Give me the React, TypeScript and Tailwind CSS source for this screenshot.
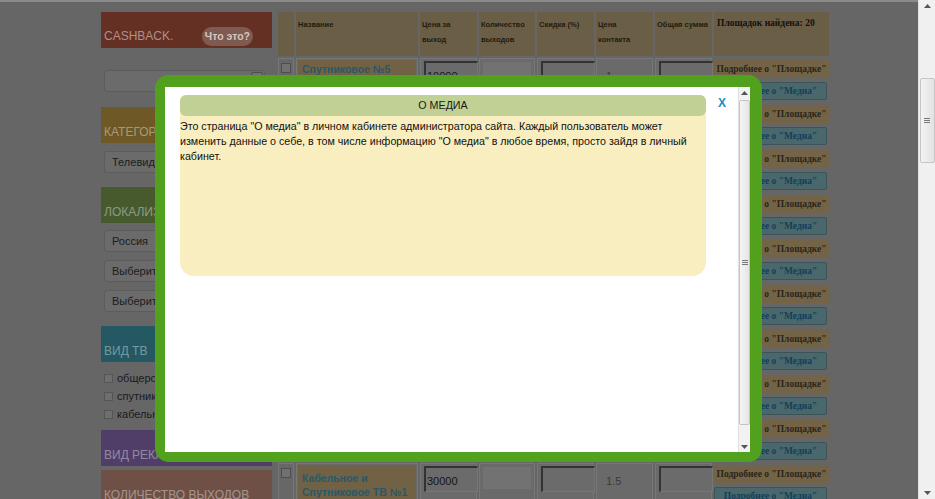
import React from 'react';

const sans = { fontFamily: '"Liberation Sans", Arial, sans-serif' };
const serif = { fontFamily: '"Liberation Serif", "Times New Roman", serif' };

const colWidths = ['w-[16px]', 'w-[122px]', 'w-[57px]', 'w-[56px]', 'w-[57px]', 'w-[57px]', 'w-[57px]', 'w-[115px]'];

const headers: string[][] = [
  [],
  ['Название'],
  ['Цена за', 'выход'],
  ['Количество', 'выходов'],
  ['Скидка (%)'],
  ['Цена', 'контакта'],
  ['Общая сумма'],
];

const rows = [
  { name: 'Спутниковое №5', price: '10000', contact: '1' },
  { name: 'Кабельное ТВ №2', price: '20000', contact: '1' },
  { name: 'Общероссийское №3', price: '15000', contact: '1' },
  { name: 'Спутниковое №7', price: '12000', contact: '1' },
  { name: 'Кабельное ТВ №4', price: '18000', contact: '1' },
  { name: 'Спутниковое №8', price: '11000', contact: '1' },
  { name: 'Кабельное ТВ №6', price: '25000', contact: '1' },
  { name: 'Общероссийское №9', price: '16000', contact: '1' },
  { name: 'Спутниковое №10', price: '14000', contact: '1' },
  { name: 'Кабельное и Спутниковое ТВ №1', price: '30000', contact: '1.5' },
];

function SideHead({ label, color }: { label: string; color: string }) {
  return (
    <div className={`shrink-0 h-[36px] ${color} flex items-end pb-[2px] pl-[3px]`}>
      <span className="text-[12px] uppercase text-white/40 whitespace-nowrap">{label}</span>
    </div>
  );
}

function Select({ label }: { label: string }) {
  return (
    <div className="shrink-0 h-[22px] w-[160px] ml-[3px] rounded-[3px] border border-[#5c5c5c] bg-[#6b6b6b] pl-[7px] text-[11px] leading-[20px] text-[#1c1c1c] whitespace-nowrap">
      {label}
    </div>
  );
}

function Check({ label }: { label: string }) {
  return (
    <div className="shrink-0 flex items-center gap-[4px] h-[18px] pl-[3px] text-[11px] text-[#1a1a1a]">
      <span className="w-[9px] h-[9px] border border-[#555] bg-[#6e6e6e]" />
      {label}
    </div>
  );
}

function Input({ value }: { value?: string }) {
  return (
    <div className="mt-[2px] ml-[3px] h-[26px] w-[54px] border-t-2 border-l-2 border-[#333] border-r border-b border-r-[#777] border-b-[#777] bg-[#6b6b6b] pl-[1px] pt-[5px] text-[11px] text-[#151515]">
      {value}
    </div>
  );
}

function Row({ r, last }: { r: (typeof rows)[number]; last?: boolean }) {
  return (
    <div className="shrink-0 flex gap-[2px] h-[43px]">
      <div className={`${colWidths[0]} border border-[#777] bg-[#676767] flex justify-center pt-[4px]`}>
        <span className="w-[10px] h-[10px] border border-[#4e4e4e] bg-[#707070]" />
      </div>
      <div className={`${colWidths[1]} border border-[#777] bg-[#6a6a6a] p-[1px]`}>
        <div className={`h-full bg-[#716246] px-[4px] ${last ? 'pt-[6px]' : 'pt-[2px]'} text-[10.5px] font-bold leading-[14px] text-[#2a5866]`}>
          {r.name}
        </div>
      </div>
      <div className={`${colWidths[2]} border border-[#777] bg-[#6a6a6a]`}>
        <Input value={r.price} />
      </div>
      <div className={`${colWidths[3]} border border-[#777] bg-[#6a6a6a] p-[3px]`}>
        <div className="h-[22px] bg-[#727272]" />
      </div>
      <div className={`${colWidths[4]} border border-[#777] bg-[#6a6a6a]`}>
        <Input />
      </div>
      <div className={`${colWidths[5]} border border-[#777] bg-[#6a6a6a] pl-[9px] pt-[9px] text-[11px] text-[#3a3a3a]`}>
        {r.contact}
      </div>
      <div className={`${colWidths[6]} border border-[#777] bg-[#6a6a6a]`}>
        <Input />
      </div>
      <div className={`${colWidths[7]} flex flex-col gap-[4px] pt-[2px]`} style={serif}>
        <div className="h-[18px] rounded-[2px] bg-[#736447] text-center text-[9.5px] font-bold leading-[18px] text-[#2b2519] whitespace-nowrap">
          Подробнее о "Площадке"
        </div>
        <div className="h-[18px] w-[113px] rounded-[2px] border border-[#3a5458] bg-[#4a686c] text-center text-[9.5px] font-bold leading-[16px] text-[#123f58] whitespace-nowrap">
          Подробнее о "Медиа"
        </div>
      </div>
    </div>
  );
}

function ArrowUp() {
  return (
    <svg width="7" height="4" viewBox="0 0 7 4">
      <path d="M0 4 L3.5 0 L7 4 Z" fill="#555" />
    </svg>
  );
}

function ArrowDown() {
  return (
    <svg width="7" height="4" viewBox="0 0 7 4">
      <path d="M0 0 L3.5 4 L7 0 Z" fill="#555" />
    </svg>
  );
}

function Grip() {
  return (
    <div className="flex flex-col gap-[1px]">
      <span className="block w-[6px] h-[1px] bg-[#777]" />
      <span className="block w-[6px] h-[1px] bg-[#777]" />
      <span className="block w-[6px] h-[1px] bg-[#777]" />
    </div>
  );
}

export default function App() {
  return (
    <div className="relative w-[935px] h-[499px] overflow-hidden flex bg-[#666666]" style={sans}>
      {/* page under the dim layer */}
      <div className="w-[918px] h-full overflow-hidden border-t-2 border-[#8a8a8a] flex items-start pl-[101px] pt-[10px]">
        <aside className="shrink-0 w-[171px] flex flex-col">
          <div className="shrink-0 h-[36px] bg-[#643024] flex items-end justify-between pl-[3px] pr-[19px] pb-[2px]">
            <span className="text-[12px] text-[#b09088] pb-[1px]">CASHBACK.</span>
            <span className="h-[19px] px-[3px] rounded-full bg-[#7e5a50] text-[10.5px] font-bold leading-[19px] text-[#d6c6c0]">Что это?</span>
          </div>
          <div className="shrink-0 mt-[22px] h-[22px] w-[161px] ml-[3px] rounded-[3px] border border-[#5c5c5c] bg-[#6b6b6b] flex justify-end pr-[1px] pt-[1px]">
            <span className="w-[12px] h-[10px] border border-[#4e4e4e] rounded-[2px] bg-[#707070]" />
          </div>
          <div className="mt-[15px]"><SideHead label="Категории" color="bg-[#6e5826]" /></div>
          <div className="mt-[8px]"><Select label="Телевидение" /></div>
          <div className="mt-[14px]"><SideHead label="Локализация" color="bg-[#465a2e]" /></div>
          <div className="mt-[7px] flex flex-col gap-[8px]">
            <Select label="Россия" />
            <Select label="Выберите регион" />
            <Select label="Выберите город" />
          </div>
          <div className="mt-[14px]"><SideHead label="Вид ТВ" color="bg-[#245862]" /></div>
          <div className="mt-[7px] flex flex-col">
            <Check label="общероссийское" />
            <Check label="спутниковое" />
            <Check label="кабельное" />
          </div>
          <div className="mt-[7px]"><SideHead label="Вид рекламы" color="bg-[#503e68]" /></div>
          <div className="mt-[4px]"><SideHead label="Количество выходов" color="bg-[#6e5046]" /></div>
        </aside>

        <div className="shrink-0 ml-[6px] flex flex-col gap-[2px]">
          <div className="shrink-0 flex gap-[2px] h-[44px]">
            {headers.map((lines, i) => (
              <div key={i} className={`${colWidths[i]} bg-[#6b5e46] px-[2px] pt-[5px] text-[7.5px] font-bold leading-[15px] text-[#211b10] whitespace-nowrap`}>
                {lines.map((l) => (
                  <div key={l}>{l}</div>
                ))}
              </div>
            ))}
            <div className={`${colWidths[7]} bg-[#6b5e46] pl-[3px] pt-[4px] text-[9.5px] font-bold text-[#111]`} style={serif}>
              Площадок найдена: 20
            </div>
          </div>
          {rows.map((r, i) => (
            <Row key={i} r={r} last={i === rows.length - 1} />
          ))}
        </div>
      </div>

      {/* browser scrollbar */}
      <div className="w-[17px] h-full bg-[#f0f0f0] border-l border-[#e2e2e2] flex flex-col items-center">
        <div className="h-[12px] flex items-center justify-center"><ArrowUp /></div>
        <div className="mt-[66px] h-[85px] w-[15px] rounded-[2px] border border-[#c6c6c6] bg-gradient-to-r from-[#f3f3f3] to-[#e2e2e2] flex items-center justify-center">
          <Grip />
        </div>
        <div className="flex-1" />
        <div className="h-[12px] flex items-center justify-center"><ArrowDown /></div>
      </div>

      {/* modal */}
      <div className="absolute left-[155px] top-[75px] w-[607px] h-[387px] rounded-[14px] bg-[#52a11e] pt-[12px] pl-[10px] pr-[12px] pb-[10px]">
        <div className="w-full h-full bg-white flex">
          <div className="flex-1 pl-[15px] pt-[8px] relative">
            <div className="w-[526px] h-[181px] rounded-t-[6px] rounded-b-[14px] bg-[#f9eec0]">
              <div className="h-[21px] rounded-[6px] bg-[#c1d094] text-center text-[10.7px] leading-[21px] text-[#1a1a1a]">О МЕДИА</div>
              <p className="pt-[3px] text-[10.7px] leading-[15px] text-[#111]">
                Это страница "О медиа" в личном кабинете администратора сайта. Каждый пользователь может
                <br />
                изменить данные о себе, в том числе информацию "О медиа" в любое время, просто зайдя в личный
                <br />
                кабинет.
              </p>
            </div>
            <span className="absolute left-[553px] top-[7px] text-[12px] font-bold text-[#1e8bc6]">X</span>
          </div>
          <div className="w-[12px] h-full bg-[#f2f2f2] border-l border-[#e0e0e0] flex flex-col items-center">
            <div className="h-[11px] flex items-center justify-center"><ArrowUp /></div>
            <div className="mt-[2px] h-[325px] w-[11px] rounded-[2px] border border-[#c4c4c4] bg-gradient-to-r from-[#f6f6f6] to-[#e4e4e4] flex items-center justify-center">
              <Grip />
            </div>
            <div className="flex-1" />
            <div className="h-[11px] flex items-center justify-center"><ArrowDown /></div>
          </div>
        </div>
      </div>
    </div>
  );
}
